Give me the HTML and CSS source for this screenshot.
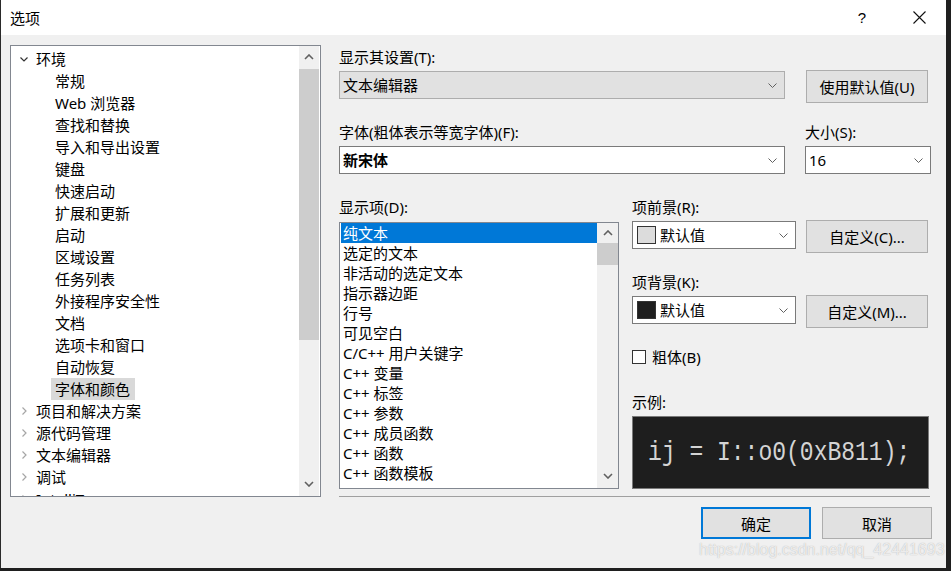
FILE: index.html
```html
<!DOCTYPE html>
<html lang="zh-CN">
<head>
<meta charset="utf-8">
<title>选项</title>
<link rel="stylesheet" href="styles.css">
</head>
<body>
<div class="window">
  <div class="titlebar">
    <span class="title">选项</span>
    <span class="cap-btn help">?</span>
    <span class="cap-btn close">
      <svg width="13" height="13" viewBox="0 0 13 13"><path d="M0.5 0.5 L12.5 12.5 M12.5 0.5 L0.5 12.5" stroke="#111" stroke-width="1.1" fill="none"/></svg>
    </span>
  </div>

  <div class="main">
    <div class="tree">
      <div class="tree-body">
        <div class="node"><svg class="chev" width="8" height="8" viewBox="0 0 8 8"><path d="M0.5 2.5 L4 6 L7.5 2.5" stroke="#333" stroke-width="1.2" fill="none"/></svg><span>环境</span></div>
        <div class="leaf">常规</div>
        <div class="leaf">Web 浏览器</div>
        <div class="leaf">查找和替换</div>
        <div class="leaf">导入和导出设置</div>
        <div class="leaf">键盘</div>
        <div class="leaf">快速启动</div>
        <div class="leaf">扩展和更新</div>
        <div class="leaf">启动</div>
        <div class="leaf">区域设置</div>
        <div class="leaf">任务列表</div>
        <div class="leaf">外接程序安全性</div>
        <div class="leaf">文档</div>
        <div class="leaf">选项卡和窗口</div>
        <div class="leaf">自动恢复</div>
        <div class="leaf"><span class="sel">字体和颜色</span></div>
        <div class="node"><svg class="chev" width="8" height="8" viewBox="0 0 8 8"><path d="M2.5 0.5 L6 4 L2.5 7.5" stroke="#a6a6a6" stroke-width="1.2" fill="none"/></svg><span>项目和解决方案</span></div>
        <div class="node"><svg class="chev" width="8" height="8" viewBox="0 0 8 8"><path d="M2.5 0.5 L6 4 L2.5 7.5" stroke="#a6a6a6" stroke-width="1.2" fill="none"/></svg><span>源代码管理</span></div>
        <div class="node"><svg class="chev" width="8" height="8" viewBox="0 0 8 8"><path d="M2.5 0.5 L6 4 L2.5 7.5" stroke="#a6a6a6" stroke-width="1.2" fill="none"/></svg><span>文本编辑器</span></div>
        <div class="node"><svg class="chev" width="8" height="8" viewBox="0 0 8 8"><path d="M2.5 0.5 L6 4 L2.5 7.5" stroke="#a6a6a6" stroke-width="1.2" fill="none"/></svg><span>调试</span></div>
        <div class="node"><svg class="chev" width="8" height="8" viewBox="0 0 8 8"><path d="M2.5 0.5 L6 4 L2.5 7.5" stroke="#a6a6a6" stroke-width="1.2" fill="none"/></svg><span>IntelliTrace</span></div>
      </div>
      <div class="vscroll tree-scroll">
        <div class="arrow"><svg width="10" height="6" viewBox="0 0 10 6"><path d="M1 5 L5 1 L9 5" stroke="#606060" stroke-width="1.6" fill="none"/></svg></div>
        <div class="thumb"></div>
        <div class="spacer"></div>
        <div class="arrow"><svg width="10" height="6" viewBox="0 0 10 6"><path d="M1 1 L5 5 L9 1" stroke="#606060" stroke-width="1.6" fill="none"/></svg></div>
      </div>
    </div>

    <div class="panel">
      <div class="label first">显示其设置(T):</div>
      <div class="row row-a">
        <div class="combo combo-wide disabled"><span class="combo-text">文本编辑器</span><svg class="drop" width="9" height="5" viewBox="0 0 9 5"><path d="M0.5 0.5 L4.5 4.5 L8.5 0.5" stroke="#606060" stroke-width="1" fill="none"/></svg></div>
        <div class="btn">使用默认值(U)</div>
      </div>

      <div class="row row-b">
        <div class="col col-font">
          <div class="label">字体(粗体表示等宽字体)(F):</div>
          <div class="combo combo-wide"><span class="combo-text bold">新宋体</span><svg class="drop" width="9" height="5" viewBox="0 0 9 5"><path d="M0.5 0.5 L4.5 4.5 L8.5 0.5" stroke="#606060" stroke-width="1" fill="none"/></svg></div>
        </div>
        <div class="col col-size">
          <div class="label">大小(S):</div>
          <div class="combo combo-size"><span class="combo-text">16</span><svg class="drop" width="9" height="5" viewBox="0 0 9 5"><path d="M0.5 0.5 L4.5 4.5 L8.5 0.5" stroke="#606060" stroke-width="1" fill="none"/></svg></div>
        </div>
      </div>

      <div class="row row-c">
        <div class="col col-list">
          <div class="label">显示项(D):</div>
          <div class="listbox">
            <div class="list-items">
              <div class="item selected">纯文本</div>
              <div class="item">选定的文本</div>
              <div class="item">非活动的选定文本</div>
              <div class="item">指示器边距</div>
              <div class="item">行号</div>
              <div class="item">可见空白</div>
              <div class="item">C/C++ 用户关键字</div>
              <div class="item">C++ 变量</div>
              <div class="item">C++ 标签</div>
              <div class="item">C++ 参数</div>
              <div class="item">C++ 成员函数</div>
              <div class="item">C++ 函数</div>
              <div class="item">C++ 函数模板</div>
            </div>
            <div class="vscroll list-scroll">
              <div class="arrow"><svg width="10" height="6" viewBox="0 0 10 6"><path d="M1 5 L5 1 L9 5" stroke="#606060" stroke-width="1.6" fill="none"/></svg></div>
              <div class="thumb"></div>
              <div class="spacer"></div>
              <div class="arrow"><svg width="10" height="6" viewBox="0 0 10 6"><path d="M1 1 L5 5 L9 1" stroke="#606060" stroke-width="1.6" fill="none"/></svg></div>
            </div>
          </div>
        </div>

        <div class="col col-right">
          <div class="label">项前景(R):</div>
          <div class="row color-row">
            <div class="combo combo-color"><span class="swatch light"></span><span class="combo-text">默认值</span><svg class="drop" width="9" height="5" viewBox="0 0 9 5"><path d="M0.5 0.5 L4.5 4.5 L8.5 0.5" stroke="#606060" stroke-width="1" fill="none"/></svg></div>
            <div class="btn">自定义(C)...</div>
          </div>
          <div class="label gap-label">项背景(K):</div>
          <div class="row color-row">
            <div class="combo combo-color"><span class="swatch dark"></span><span class="combo-text">默认值</span><svg class="drop" width="9" height="5" viewBox="0 0 9 5"><path d="M0.5 0.5 L4.5 4.5 L8.5 0.5" stroke="#606060" stroke-width="1" fill="none"/></svg></div>
            <div class="btn">自定义(M)...</div>
          </div>
          <div class="check-row"><span class="checkbox"></span><span>粗体(B)</span></div>
          <div class="label sample-label">示例:</div>
          <div class="sample"><span class="sample-text">ij = I::o0(0xB811);</span></div>
        </div>
      </div>
      <div class="separator"></div>
    </div>
  </div>

  <div class="footer">
    <div class="btn dlg-btn default">确定</div>
    <div class="btn dlg-btn">取消</div>
  </div>
  <div class="watermark">https://blog.csdn.net/qq_42441693</div>
</div>
</body>
</html>
```

FILE: styles.css
```css
* { box-sizing: border-box; }

body {
  margin: 0;
  background: #1f1f1f;
  font-family: "Noto Sans", "Noto Sans CJK SC", sans-serif;
  font-size: 15px;
  color: #000;
}

.window {
  position: relative;
  width: 946px;
  height: 568px;
  background: #f0f0f0;
  display: flex;
  flex-direction: column;
  overflow: hidden;
  border-left: 1px solid #2a2a2a;
}

.titlebar {
  height: 35px;
  background: #fff;
  display: flex;
  align-items: center;
  padding-left: 9px;
  flex-shrink: 0;
}

.title { line-height: 20px; }

.cap-btn {
  width: 46px;
  height: 35px;
  display: flex;
  align-items: center;
  justify-content: center;
}

.help {
  margin-left: auto;
  font-family: "Liberation Sans", sans-serif;
  font-size: 15px;
}

.close { margin-left: 11px; margin-right: 4px; }

.main {
  display: flex;
  padding: 10px 0 0 9px;
  height: 462px;
  flex-shrink: 0;
}

/* tree */
.tree {
  width: 311px;
  height: 452px;
  border: 1px solid #828790;
  background: #fff;
  display: flex;
  overflow: hidden;
}

.tree-body {
  flex: 1;
  padding-top: 2px;
  overflow: hidden;
}

.node, .leaf {
  height: 22px;
  line-height: 22px;
  white-space: nowrap;
  display: flex;
  align-items: center;
}

.node { padding-left: 9px; }
.chev { margin-right: 8px; flex-shrink: 0; }
.leaf { padding-left: 44px; }

.sel {
  background: #d9d9d9;
  margin-left: -4px;
  padding: 0 5px 0 4px;
  line-height: 22px;
}

.vscroll {
  background: #f0f0f0;
  display: flex;
  flex-direction: column;
  flex-shrink: 0;
}

.vscroll .arrow {
  height: 20px;
  display: flex;
  align-items: center;
  justify-content: center;
}

.vscroll .thumb { background: #cdcdcd; }
.vscroll .spacer { flex: 1; }

.tree-scroll { width: 20px; margin-right: 1px; }
.tree-scroll .arrow:first-child { height: 21px; }
.tree-scroll .thumb { margin-top: 2px; height: 271px; }
.tree-scroll .arrow:last-child { height: 24px; }

/* right panel */
.panel {
  margin-left: 18px;
  width: 592px;
  display: flex;
  flex-direction: column;
}

.label {
  height: 20px;
  line-height: 20px;
  white-space: nowrap;
}

.label.first { margin-top: 2px; }

.row { display: flex; }

.row-a { margin-top: 3px; align-items: flex-start; gap: 21px; }
.row-a .combo { margin-top: 1px; }

.combo {
  height: 28px;
  border: 1px solid #7a7a7a;
  background: #fff;
  display: flex;
  align-items: center;
  padding-left: 3px;
  position: relative;
}

.combo.disabled {
  background: #e1e1e1;
  border-color: #adadad;
}

.combo-text { flex: 1; line-height: 20px; white-space: nowrap; }
.combo-text.bold { font-weight: bold; }

.drop { margin-right: 7px; flex-shrink: 0; }

.combo-wide { width: 446px; }

.btn {
  height: 33px;
  width: 122px;
  background: #e1e1e1;
  border: 1px solid #adadad;
  display: flex;
  align-items: center;
  justify-content: center;
  white-space: nowrap;
}

.row-b { margin-top: 19px; gap: 20px; }
.col { display: flex; flex-direction: column; }
.col-font .combo { margin-top: 4px; }
.col-size .combo { margin-top: 4px; }
.combo-size { width: 126px; padding-left: 3px; }

.row-c { margin-top: 23px; gap: 13px; }

.col-list { width: 280px; }

.listbox {
  margin-top: 5px;
  height: 267px;
  border: 1px solid #828790;
  background: #fff;
  display: flex;
}

.list-items {
  flex: 1;
  padding: 0 0 0 1px;
  overflow: hidden;
}

.item {
  height: 20px;
  line-height: 20px;
  padding-left: 2px;
  white-space: nowrap;
}

.item.selected { background: #0078d7; color: #fff; }

.list-scroll { width: 21px; }
.list-scroll .thumb { height: 22px; }
.list-scroll .arrow:last-child { height: 24px; }

.col-right { width: 299px; }

.color-row { margin-top: 3px; gap: 10px; align-items: flex-start; }
.combo-color { width: 164px; margin-top: 1px; padding-left: 4px; }

.swatch {
  width: 19px;
  height: 18px;
  border: 1px solid #333;
  margin-right: 4px;
  flex-shrink: 0;
}
.swatch.light { background: #dcdcdc; }
.swatch.dark { background: #1e1e1e; }

.gap-label { margin-top: 19px; }

.check-row {
  margin-top: 19px;
  height: 20px;
  display: flex;
  align-items: center;
  line-height: 20px;
}

.checkbox {
  width: 14px;
  height: 14px;
  border: 1px solid #333;
  background: #fff;
  margin-right: 6px;
}

.sample-label { margin-top: 25px; }

.sample {
  margin-top: 4px;
  height: 73px;
  width: 297px;
  background: #1e1e1e;
  border: 1px solid #7a7a7a;
  display: flex;
  align-items: center;
  padding-left: 15px;
}

.sample-text {
  font-family: "Liberation Mono", monospace;
  font-size: 23px;
  color: #d4d4d4;
  white-space: pre;
  display: inline-block;
  transform: scaleY(1.18);
}

.separator {
  margin-top: 7px;
  height: 1px;
  width: 591px;
  background: #a0a0a0;
}

.footer {
  display: flex;
  justify-content: flex-end;
  gap: 11px;
  margin-top: 10px;
  padding-right: 14px;
}

.dlg-btn { width: 110px; height: 32px; }
.dlg-btn.default { border: 2px solid #0078d7; }

.watermark {
  position: absolute;
  left: 698px;
  top: 541px;
  font-family: "Liberation Sans", sans-serif;
  font-size: 16px;
  color: rgba(255, 255, 255, 0.75);
  text-shadow: 0 0 1px rgba(120, 120, 120, 0.6);
  white-space: nowrap;
  pointer-events: none;
}
```
